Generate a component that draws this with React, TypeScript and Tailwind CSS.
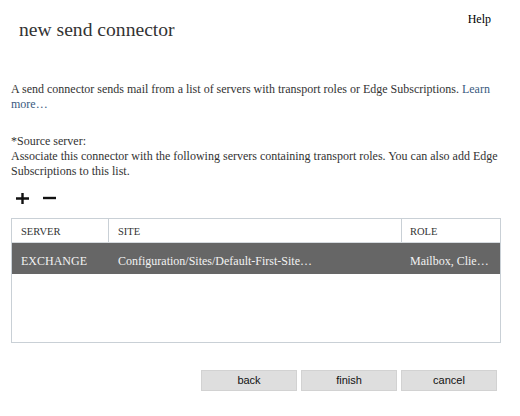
import React from "react";

function PlusIcon() {
  return (
    <svg width="13" height="13" viewBox="0 0 13 13" aria-hidden="true">
      <path d="M0 6.5H13M6.5 1V12" stroke="#111" strokeWidth="2.4" fill="none" />
    </svg>
  );
}

function MinusIcon() {
  return (
    <svg width="13" height="13" viewBox="0 0 13 13" aria-hidden="true">
      <path d="M0 6H13" stroke="#111" strokeWidth="2.4" fill="none" />
    </svg>
  );
}

export default function App() {
  return (
    <div className="w-[520px] h-[416px] bg-white text-[#333] flex flex-col overflow-hidden font-['Liberation_Serif','Times_New_Roman',serif]">
      <div className="flex justify-between items-start">
        <h1 className="pl-[19px] pt-[18px] text-[19.6px] leading-[24px] text-[#333] font-normal">
          new send connector
        </h1>
        <a className="mt-[11px] mr-[29px] text-[12px] leading-[16px] text-black">Help</a>
      </div>

      <div className="pl-[11px] pr-[9px] mt-[40px] text-[12px] leading-[15px]">
        <p>
          A send connector sends mail from a list of servers with transport roles or Edge Subscriptions.{" "}
          <a className="text-[#3a5a80]">Learn more…</a>
        </p>
        <div className="mt-[22px]">
          <div>*Source server:</div>
          <div>
            Associate this connector with the following servers containing transport roles. You can also add Edge
            Subscriptions to this list.
          </div>
        </div>
      </div>

      <div className="flex items-center gap-[14px] pl-[16px] mt-[13px] h-[13px]">
        <PlusIcon />
        <MinusIcon />
      </div>

      <div className="ml-[11px] mt-[13px] w-[490px] h-[125px] border border-[#c9d0d6] flex flex-col">
        <div className="grid grid-cols-[97px_293px_1fr] h-[24px] text-[10.5px] leading-[14px] text-[#333] border-b border-[#d6dbdf]">
          <div className="pl-[9px] pt-[6px] border-r border-[#c9d0d6]">SERVER</div>
          <div className="pl-[9px] pt-[6px] border-r border-[#c9d0d6]">SITE</div>
          <div className="pl-[8px] pt-[6px]">ROLE</div>
        </div>
        <div className="grid grid-cols-[97px_293px_1fr] h-[31px] bg-[#666666] text-[#f2f2f2] text-[12px] leading-[15px]">
          <div className="pl-[9px] pt-[11px] whitespace-nowrap">EXCHANGE</div>
          <div className="pl-[9px] pt-[11px] whitespace-nowrap">Configuration/Sites/Default-First-Site…</div>
          <div className="pl-[8px] pt-[11px] whitespace-nowrap">Mailbox, Clie…</div>
        </div>
        <div className="flex-1" />
      </div>

      <div className="flex justify-end gap-[4px] pr-[23px] mt-[27px] font-['Liberation_Sans',Arial,sans-serif]">
        <button className="w-[96px] h-[21px] bg-[#dedede] border border-[#d2d2d2] text-[11px] text-[#111]">back</button>
        <button className="w-[96px] h-[21px] bg-[#dedede] border border-[#d2d2d2] text-[11px] text-[#111]">finish</button>
        <button className="w-[96px] h-[21px] bg-[#dedede] border border-[#d2d2d2] text-[11px] text-[#111]">cancel</button>
      </div>
    </div>
  );
}
